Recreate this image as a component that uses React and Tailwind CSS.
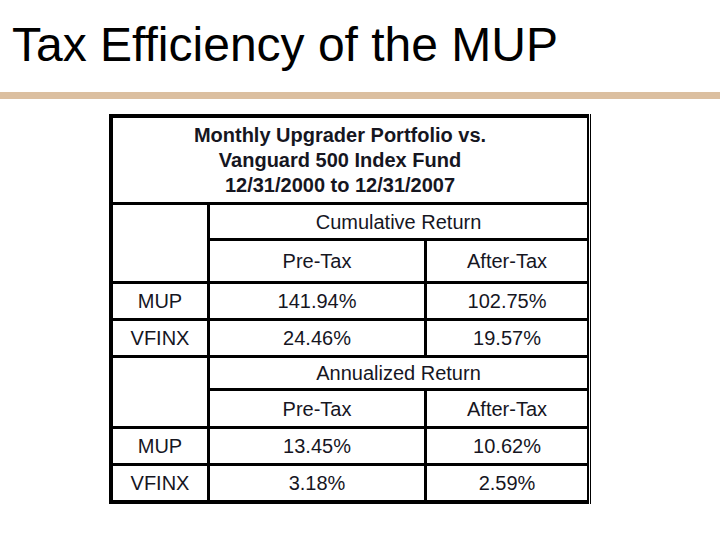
import React from 'react';

const Cell = ({ children, className = '' }) => (
  <div className={`bg-white flex items-center justify-center ${className}`}>{children}</div>
);

const App = () => {
  const font = { fontFamily: '"Liberation Sans", Arial, sans-serif' };

  return (
    <div className="w-[720px] h-[540px] bg-white overflow-hidden" style={font}>
      {/* Title */}
      <div className="pt-[21px] pl-[12px]">
        <h1 className="text-[48px] leading-none text-black">Tax Efficiency of the MUP</h1>
      </div>
      <div className="mt-[23px] h-[7px] bg-[#dbbfa0]" />

      {/* Table */}
      <div className="mt-[15px] ml-[109px] w-[482px] border-r border-black pr-px bg-white">
        <div className="bg-black pl-[4px] pr-[2px] pt-[4px] pb-[4px] grid grid-cols-[94px_214px_160px] gap-[3px] grid-rows-[84px_33px_40px_34px_34px_30px_35px_34px_34px] text-[#16161f] text-[20px]">
          <Cell className="col-span-3 flex-col font-bold leading-[25px] pr-[20px]">
            <span>Monthly Upgrader Portfolio vs.</span>
            <span>Vanguard 500 Index Fund</span>
            <span>12/31/2000 to 12/31/2007</span>
          </Cell>

          {/* Cumulative */}
          <Cell className="row-span-2" />
          <Cell className="col-span-2">Cumulative Return</Cell>
          <Cell>Pre-Tax</Cell>
          <Cell>After-Tax</Cell>
          <Cell>MUP</Cell>
          <Cell>141.94%</Cell>
          <Cell>102.75%</Cell>
          <Cell>VFINX</Cell>
          <Cell>24.46%</Cell>
          <Cell>19.57%</Cell>

          {/* Annualized */}
          <Cell className="row-span-2" />
          <Cell className="col-span-2">Annualized Return</Cell>
          <Cell>Pre-Tax</Cell>
          <Cell>After-Tax</Cell>
          <Cell>MUP</Cell>
          <Cell>13.45%</Cell>
          <Cell>10.62%</Cell>
          <Cell>VFINX</Cell>
          <Cell>3.18%</Cell>
          <Cell>2.59%</Cell>
        </div>
      </div>
    </div>
  );
};

export default App;
